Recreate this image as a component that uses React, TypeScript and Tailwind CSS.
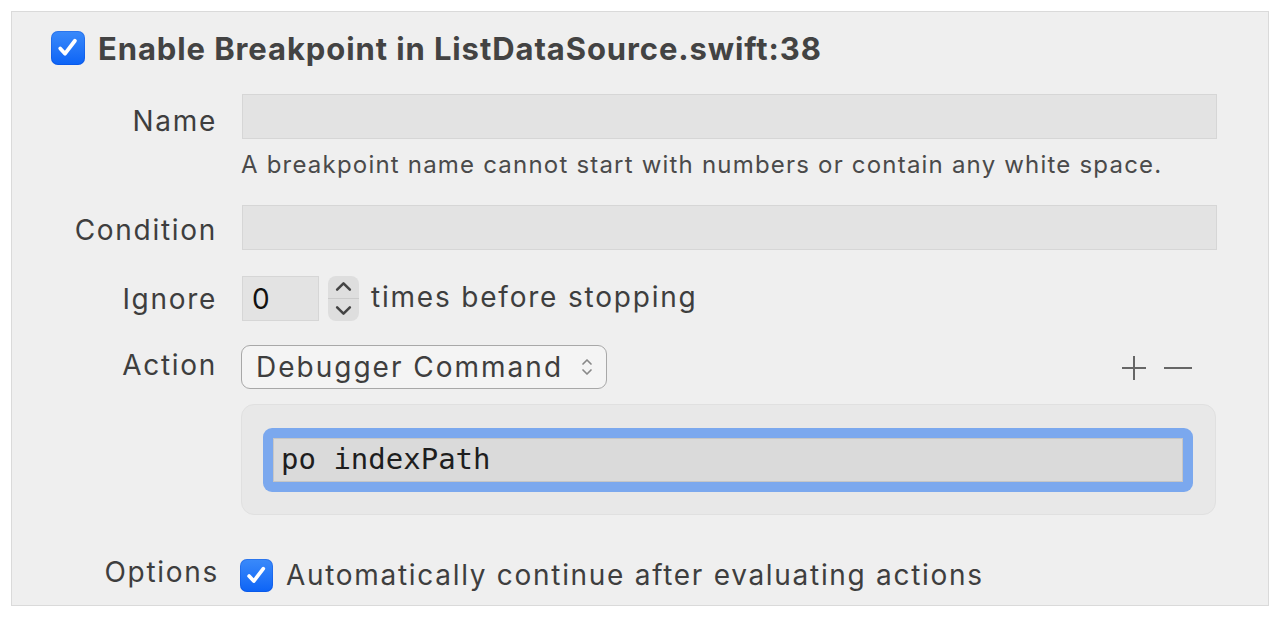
import React from 'react';

function CheckBox({ size }: { size: number }) {
  return (
    <div
      className="flex shrink-0 items-center justify-center rounded-[7px] bg-gradient-to-b from-[#3a8afa] to-[#0b63f6] shadow-[inset_0_0_0_1px_rgba(0,60,200,0.25)]"
      style={{ width: size, height: size }}
    >
      <svg viewBox="0 0 24 24" width={size * 0.74} height={size * 0.74} fill="none">
        <path d="M5 12.8l4.6 5L19 5.5" stroke="white" strokeWidth="3.6" strokeLinecap="round" strokeLinejoin="round" />
      </svg>
    </div>
  );
}

function Label({ children, pt }: { children: React.ReactNode; pt: string }) {
  return (
    <div className={`w-[205px] shrink-0 text-right text-[28px] leading-[30px] tracking-[1.7px] text-[#3e3e3e] ${pt}`}>
      {children}
    </div>
  );
}

export default function App() {
  return (
    <div className="min-h-[618px] w-full bg-white pt-[11px] pl-[11px]" style={{ fontFamily: 'Inter, "Noto Sans", sans-serif' }}>
      <div className="h-[595px] w-[1258px] border border-[#dadada] bg-[#efefef] pt-[19px]">
        {/* Title */}
        <div className="flex h-[34px] items-center gap-[13px] pl-[39px]">
          <CheckBox size={34} />
          <span className="text-[31px] font-bold leading-none tracking-[0.9px] text-[#434343]">
            Enable Breakpoint in ListDataSource.swift:38
          </span>
        </div>

        {/* Name */}
        <div className="mt-[29px] flex items-start">
          <Label pt="pt-[12px]">Name</Label>
          <div className="ml-[25px] h-[45px] w-[975px] border border-[#d6d6d6] bg-[#e3e3e3]" />
        </div>
        <div className="mt-[11px] ml-[229px] text-[24px] leading-[30px] tracking-[1.2px] text-[#4a4a4a]">
          A breakpoint name cannot start with numbers or contain any white space.
        </div>

        {/* Condition */}
        <div className="mt-[25px] flex items-start">
          <Label pt="pt-[10px]">Condition</Label>
          <div className="ml-[25px] h-[45px] w-[975px] border border-[#d6d6d6] bg-[#e3e3e3]" />
        </div>

        {/* Ignore */}
        <div className="mt-[26px] flex items-start">
          <Label pt="pt-[8px]">Ignore</Label>
          <div className="ml-[25px] flex h-[45px] w-[77px] items-center border border-[#d6d6d6] bg-[#e3e3e3] pl-[9px] text-[28px] text-[#111]">
            0
          </div>
          <div className="ml-[9px] flex h-[45px] w-[31px] flex-col items-center justify-between rounded-[8px] bg-[#dedede] py-[5px]">
            <svg viewBox="0 0 16 10" width="17" height="11" fill="none">
              <path d="M2 8l6-6 6 6" stroke="#444" strokeWidth="2.4" strokeLinecap="round" strokeLinejoin="round" />
            </svg>
            <div className="h-px w-full bg-[#cbcbcb]" />
            <svg viewBox="0 0 16 10" width="17" height="11" fill="none">
              <path d="M2 2l6 6 6-6" stroke="#444" strokeWidth="2.4" strokeLinecap="round" strokeLinejoin="round" />
            </svg>
          </div>
          <span className="ml-[12px] pt-[6px] text-[28px] leading-[30px] tracking-[1.8px] text-[#3e3e3e]">times before stopping</span>
        </div>

        {/* Action */}
        <div className="mt-[24px] flex items-start">
          <Label pt="pt-[5px]">Action</Label>
          <div className="ml-[24px] flex h-[44px] w-[366px] items-center justify-between rounded-[9px] border-[1.5px] border-[#a8a8a8] bg-[#f4f4f4] pr-[13px] pl-[14px]">
            <span className="text-[28px] leading-none tracking-[2px] text-[#3e3e3e]">Debugger Command</span>
            <svg viewBox="0 0 12 20" width="12" height="20" fill="none">
              <path d="M2 7l4-4 4 4M2 13l4 4 4-4" stroke="#888" strokeWidth="1.7" strokeLinecap="round" strokeLinejoin="round" />
            </svg>
          </div>
          <div className="ml-auto mr-[76px] flex items-center gap-[17px] pt-[10px]">
            <svg viewBox="0 0 26 26" width="26" height="26" fill="none">
              <path d="M13 1v24M1 13h24" stroke="#666" strokeWidth="2" />
            </svg>
            <svg viewBox="0 0 28 26" width="28" height="26" fill="none">
              <path d="M0 13h28" stroke="#666" strokeWidth="2" />
            </svg>
          </div>
        </div>

        {/* Command box */}
        <div className="mt-[15px] ml-[229px] flex h-[111px] w-[975px] items-center rounded-[13px] border border-[#e0e0e0] bg-[#e8e8e8] pl-[21px]">
          <div className="h-[64px] w-[930px] rounded-[9px] bg-[#7ba8ee] p-[10px]">
            <div
              className="flex h-full items-center border border-[#c6c6c6] bg-[#dadada] pl-[7px] text-[29px] text-[#1e1e1e]"
              style={{ fontFamily: '"DejaVu Sans Mono", monospace' }}
            >
              po indexPath
            </div>
          </div>
        </div>

        {/* Options */}
        <div className="mt-[42px] flex items-center">
          <div className="w-[207px] shrink-0 pb-[6px] text-right text-[28px] leading-[30px] tracking-[1.7px] text-[#3e3e3e]">Options</div>
          <div className="ml-[21px]">
            <CheckBox size={33} />
          </div>
          <span className="ml-[13px] text-[28px] leading-[30px] tracking-[1.7px] text-[#3e3e3e]">
            Automatically continue after evaluating actions
          </span>
        </div>
      </div>
    </div>
  );
}
